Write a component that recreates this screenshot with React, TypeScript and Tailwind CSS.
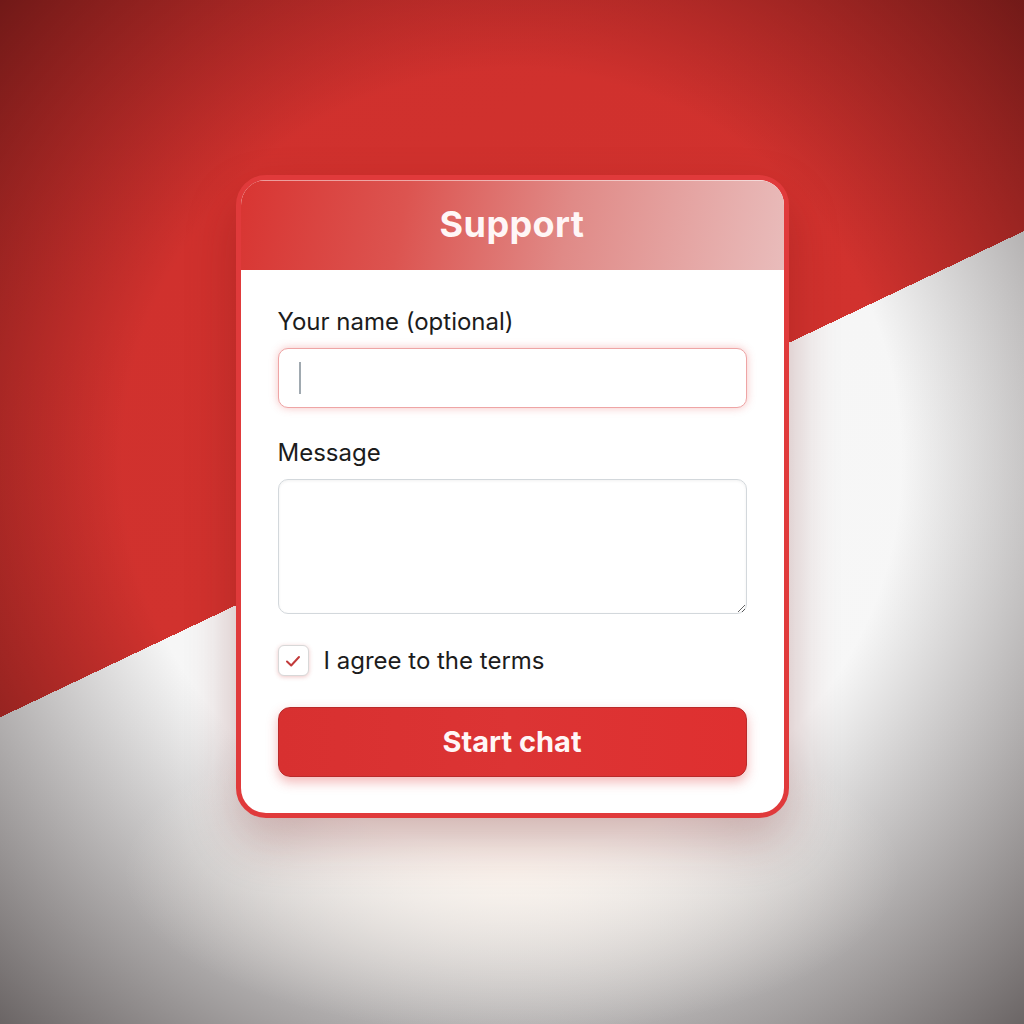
export default function App() {
  return (
    <div
      className="relative w-[1024px] h-[1024px] overflow-hidden flex justify-center pt-[175px] bg-[linear-gradient(154.6deg,#cf302d_0%,#d1322e_47.5%,#f6f6f6_47.5%,#f8f8f8_100%)]"
      style={{ fontFamily: "Inter, 'Noto Sans', sans-serif" }}
    >
      {/* vignette */}
      <div className="absolute inset-0 pointer-events-none bg-[radial-gradient(ellipse_76%_76%_at_50%_45%,rgba(0,0,0,0)_50%,rgba(10,0,0,0.62)_100%)]" />
      <div className="absolute inset-0 pointer-events-none bg-[radial-gradient(ellipse_38%_16%_at_50%_85%,rgba(255,246,238,0.75)_0%,rgba(255,255,255,0)_100%)]" />

      <div className="relative w-[553px] h-[643px] rounded-[30px] border-[5px] border-[#e03a3b] bg-white overflow-hidden shadow-[0_24px_50px_rgba(110,20,20,0.3)] flex flex-col">
        <div className="h-[90px] flex items-center justify-center bg-[linear-gradient(100deg,#d83532_0%,#dc5450_30%,#e08a87_60%,#e9bcbb_100%)] shadow-[inset_0_1px_0_rgba(255,255,255,0.5)]">
          <span className="text-[#fff6f6] text-[36px] font-bold tracking-[0.4px] mt-[-2px]">Support</span>
        </div>
        <div className="flex flex-col px-[37px] pt-[38px]">
          <label className="text-[24px] leading-[28px] text-[#1c1c1c]">Your name (optional)</label>
          <div className="mt-[12px] h-[60px] rounded-[10px] border border-[#eea5a5] bg-white shadow-[0_0_9px_rgba(230,80,80,0.35)] flex items-center pl-[20px]">
            <div className="w-[2px] h-[32px] bg-[#a0a9b0]" />
          </div>
          <label className="mt-[31px] text-[24px] leading-[28px] text-[#1c1c1c]">Message</label>
          <textarea className="mt-[12px] h-[135px] rounded-[10px] border border-[#d3d8dc] bg-white shadow-[inset_0_1px_3px_rgba(0,0,0,0.06)] outline-none" />
          <div className="mt-[31px] flex items-center gap-[15px]">
            <div className="w-[31px] h-[31px] rounded-[6px] border border-[#d8d8d8] bg-white shadow-[0_1px_4px_rgba(200,60,60,0.3)] flex items-center justify-center">
              <svg width="20" height="20" viewBox="0 0 20 20" fill="none">
                <path d="M4 10.5 L8.2 14.5 L16 6" stroke="#c23a3a" strokeWidth="2" strokeLinecap="round" strokeLinejoin="round" />
              </svg>
            </div>
            <span className="text-[24px] leading-[28px] text-[#1c1c1c]">I agree to the terms</span>
          </div>
          <button className="mt-[31px] h-[70px] rounded-[12px] border border-[#b92a2a] bg-[linear-gradient(90deg,#d83030_0%,#dc3434_50%,#df3030_100%)] text-[#fff6f6] text-[29px] font-bold shadow-[0_5px_12px_rgba(220,50,50,0.35)]">
            Start chat
          </button>
        </div>
      </div>
    </div>
  );
}
